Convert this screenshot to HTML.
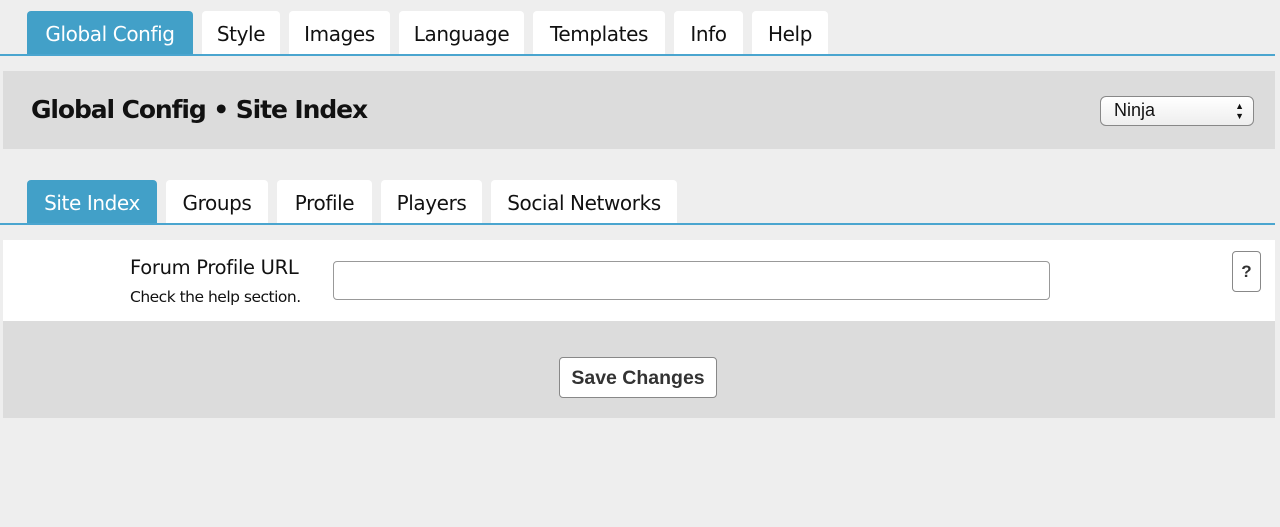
<!DOCTYPE html>
<html><head><style>
*{box-sizing:border-box;margin:0;padding:0}
body{width:1280px;height:527px;background:#eeeeee;font-family:"DejaVu Sans","Liberation Sans",sans-serif;position:relative;overflow:hidden;color:#111}
.tab{position:absolute;background:#fff;border-radius:4px 4px 0 0;font-size:20px;display:flex;align-items:center;justify-content:center;letter-spacing:-0.4px;padding-top:2px}
.act{background:#42a0c8;color:#fff}
.line{position:absolute;left:0;width:1275px;height:2px;background:#4aa5cf}
.p{position:absolute;left:3px;width:1272px}
</style></head><body>
<div class="tab act" style="left:27px;top:11px;width:166px;height:44px">Global Config</div>
<div class="tab" style="left:202px;top:11px;width:78px;height:44px">Style</div>
<div class="tab" style="left:289px;top:11px;width:101px;height:44px">Images</div>
<div class="tab" style="left:399px;top:11px;width:125px;height:44px">Language</div>
<div class="tab" style="left:533px;top:11px;width:132px;height:44px">Templates</div>
<div class="tab" style="left:674px;top:11px;width:69px;height:44px">Info</div>
<div class="tab" style="left:752px;top:11px;width:76px;height:44px">Help</div>
<div class="line" style="top:54px"></div>
<div class="p" style="top:71px;height:78px;background:#dcdcdc"></div>
<div style="position:absolute;left:31px;top:95px;font-size:25px;font-weight:bold;letter-spacing:-1.1px">Global Config • Site Index</div>
<div style="position:absolute;left:1100px;top:96px;width:154px;height:30px;border:1px solid #888;border-radius:6px;background:linear-gradient(#fff,#eee);font-family:'Liberation Sans',sans-serif;font-size:18px;padding:3px 0 0 13px">Ninja<span style="position:absolute;right:9px;top:4px;font-size:9px;line-height:10px">▲<br>▼</span></div>
<div class="tab act" style="left:27px;top:180px;width:130px;height:44px">Site Index</div>
<div class="tab" style="left:166px;top:180px;width:102px;height:44px">Groups</div>
<div class="tab" style="left:277px;top:180px;width:95px;height:44px">Profile</div>
<div class="tab" style="left:381px;top:180px;width:101px;height:44px">Players</div>
<div class="tab" style="left:491px;top:180px;width:186px;height:44px">Social Networks</div>
<div class="line" style="top:223px"></div>
<div class="p" style="top:240px;height:81px;background:#fff"></div>
<div style="position:absolute;left:130px;top:256px;font-size:19.5px;letter-spacing:-0.3px">Forum Profile URL</div>
<div style="position:absolute;left:130px;top:288px;font-size:15.5px;letter-spacing:-0.5px">Check the help section.</div>
<div style="position:absolute;left:333px;top:261px;width:717px;height:39px;border:1px solid #999;border-radius:4px;background:#fff"></div>
<div style="position:absolute;left:1232px;top:251px;width:29px;height:41px;border:1px solid #888;border-radius:4px;background:#fff;font-family:'Liberation Sans',sans-serif;font-weight:bold;font-size:17px;text-align:center;line-height:39px;color:#333">?</div>
<div class="p" style="top:321px;height:97px;background:#dcdcdc"></div>
<div style="position:absolute;left:559px;top:357px;width:158px;height:41px;border:1px solid #888;border-radius:4px;background:#fff;font-family:'Liberation Sans',sans-serif;font-weight:bold;font-size:19.5px;color:#333;text-align:center;line-height:40px">Save Changes</div>
</body></html>
